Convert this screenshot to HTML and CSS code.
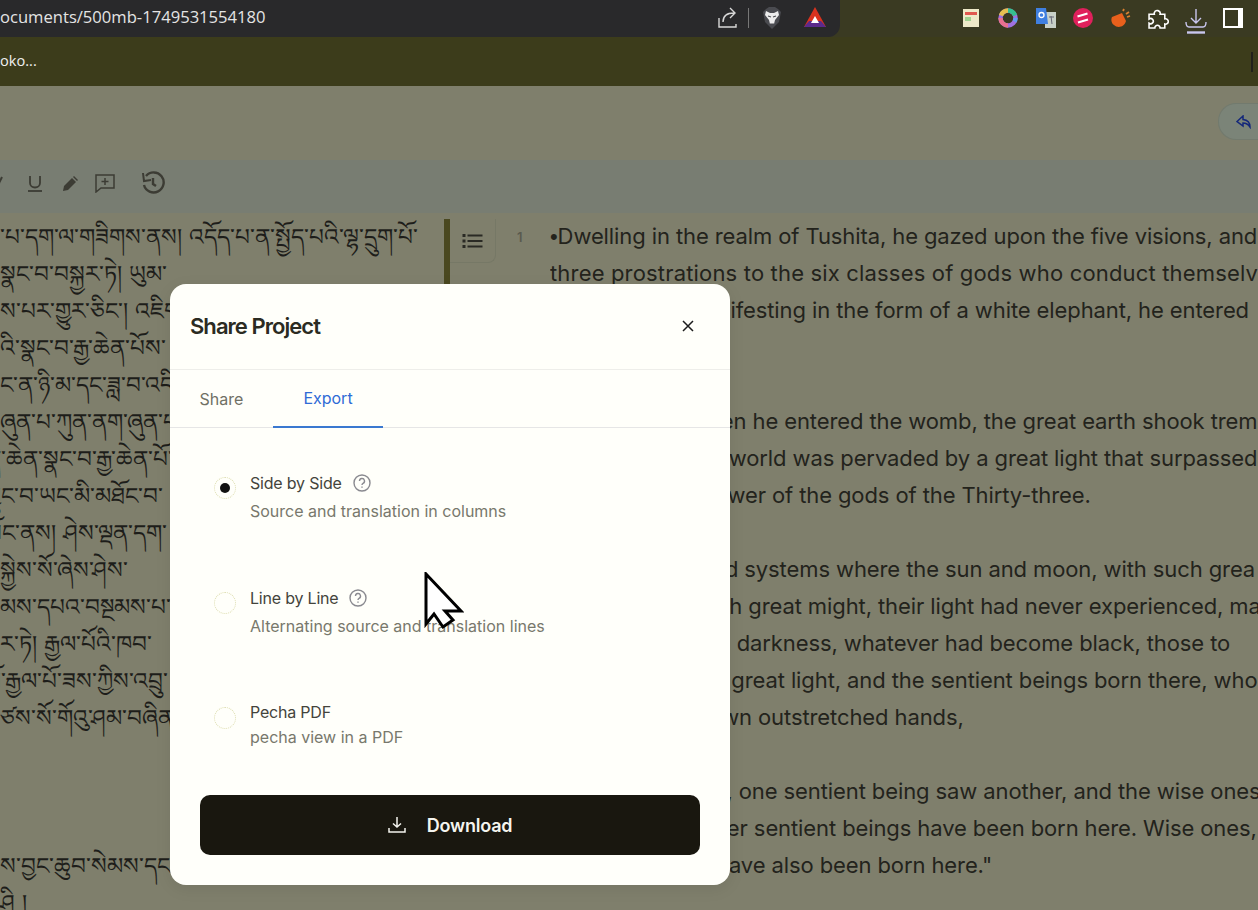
FILE: index.html
```html
<!DOCTYPE html>
<html lang="en">
<head>
<meta charset="utf-8">
<title>Share Project</title>
<link rel="stylesheet" href="styles.css">
</head>
<body>
<div class="browser">
  <div class="tabbar">
    <div class="address">
      <span class="url">ocuments/500mb-1749531554180</span>
      <div class="address-icons">
        <svg class="i24" viewBox="0 0 24 24" fill="none" stroke="#d8d8d8" stroke-width="1.400"><path d="M3 12v9h17v-3M7 16c0-6 4-9 11-9M14 2l5 5-5 5"/></svg>
        <span class="sep"></span>
        <svg class="i24 lion" viewBox="0 0 24 24"><path d="M6 3l3-2h6l3 2 3 3-2 10-7 7-7-7-2-10z" fill="#4a4b50"/><path d="M6 5l4 2h4l4-2 1 4-4 5-1 4h-4l-1-4-4-5z" fill="#ececec"/><path d="M8 10l3 1M16 10l-3 1M10 18h4" stroke="#4a4b50" stroke-width="1.200"/></svg>
        <svg class="i24 bat" viewBox="0 0 24 24"><path d="M12 1l11 20H1z" fill="#d8321f"/><path d="M1 21l5-6h12l5 6z" fill="#5b2a8c"/><path d="M12 10l4 7H8z" fill="#fff"/></svg>
      </div>
    </div>
    <div class="exts">
      <span class="ext"><svg class="i20" viewBox="0 0 20 20"><rect x="2" y="1" width="16" height="18" fill="#eee9c9"/><rect x="4" y="4" width="12" height="3" fill="#e0584f"/><rect x="4" y="9" width="6" height="4" fill="#9fd08f"/></svg></span>
      <span class="ext"><svg class="i20" viewBox="0 0 20 20" fill="none" stroke-width="4.400"><circle cx="10" cy="10" r="7.500" stroke="#a070e0"/><path d="M10 2.500a7.500 7.500 0 0 1 7 5" stroke="#35c090"/><path d="M3 7.500a7.500 7.500 0 0 1 7-5" stroke="#e8c050"/><path d="M10 17.500a7.500 7.500 0 0 1-7.500-7.500" stroke="#e87090"/><path d="M17.500 10a7.500 7.500 0 0 1-1 3.500" stroke="#60a0f0"/></svg></span>
      <span class="ext"><svg class="i20" viewBox="0 0 20 20"><rect x="9" y="4" width="11" height="16" fill="#c8d0c8"/><path d="M0 0h10l2 16H0z" fill="#3f7fe0"/><circle cx="5.500" cy="7" r="2.500" fill="none" stroke="#fff" stroke-width="1.300"/><path d="M13 9h5M15 8l1 8" stroke="#667" stroke-width="1"/></svg></span>
      <span class="ext"><svg class="i20" viewBox="0 0 20 20"><circle cx="10" cy="10" r="10" fill="#e0205c"/><path d="M4.500 8.500l10-3M5 14.500l10-3" stroke="#fff" stroke-width="2.200"/></svg></span>
      <span class="ext"><svg class="i20" viewBox="0 0 20 20"><path d="M1 9l10-4 4 8c-2 7-9 7-12 4-3-2-3-6-2-8z" fill="#e8601c"/><path d="M12 3l1-2M15 6l3-2M16 9l3-1" stroke="#d88030" stroke-width="1.800"/></svg></span>
      <span class="ext"><svg class="i21" viewBox="0 0 20 20" fill="none" stroke="#fff" stroke-width="1.500"><path d="M1 6h5a3 3 0 0 1 0-1.500 2.800 2.800 0 1 1 5.500 1.500H16v4.300a2.600 2.600 0 1 1 0 5V19h-4.500a2.500 2.500 0 1 0-5 0H1v-4.500a2.500 2.500 0 1 0 0-4z"/></svg></span>
      <span class="ext"><svg class="dl" viewBox="0 0 22 26" fill="none" stroke="#c9c6ee" stroke-width="1.400"><path d="M11 1v14M6 10l5 5 5-5M1 14c0 3 1 5 3 5h14c2 0 3-2 3-5"/><path d="M2 24.500h18" stroke-width="2.400"/></svg></span>
      <span class="ext"><svg class="i20" viewBox="0 0 20 20"><rect x="1" y="1" width="18" height="18" fill="none" stroke="#fff" stroke-width="2"/><rect x="15" y="1" width="5" height="18" fill="#fff"/></svg></span>
    </div>
  </div>
  <div class="bookmarks">
    <span class="bookmark">oko...</span>
    <span class="bm-sep"></span>
  </div>
</div>
<main class="app">
  <div class="app-head">
    <div class="undo-pill">
      <svg class="undo" viewBox="0 0 16 14" fill="none" stroke="#13277a" stroke-width="1.500"><path d="M7 1L1 6.500 7 11V8c3 0 5 1 7 4 0-5-3-7-7-7.500z"/></svg>
    </div>
  </div>
  <div class="toolbar">
    <svg class="tool t-first" viewBox="0 0 20 20" fill="none" stroke="#3c3c34" stroke-width="2"><path d="M6 16l6-12"/></svg>
    <svg class="tool" viewBox="0 0 20 20" fill="none" stroke="#3c3c34" stroke-width="1.800"><path d="M5 3v7c0 6 10 6 10 0V3"/><path d="M3 18h14"/></svg>
    <svg class="tool" viewBox="0 0 20 20"><path d="M3 18l1-5 8-8 4 4-8 8z" fill="#3c3c34"/><path d="M13 4l1-1 4 4-1 1z" fill="#3c3c34"/></svg>
    <svg class="tool" viewBox="0 0 20 20" fill="none" stroke="#3c3c34" stroke-width="1.500"><path d="M1 2h18v13H6l-5 4zM10 5v7M6.500 8.500h7"/></svg>
    <svg class="tool hist" viewBox="0 0 24 24" fill="none" stroke="#3c3c34" stroke-width="2.400"><path d="M5 5a10 10 0 1 1-2 9"/><path d="M2 2l1 8 7-1" stroke-width="2"/><path d="M12 7v6l3 2"/></svg>
  </div>
  <div class="editor">
    <div class="source">
      <p class="tb">་པ་དག་ལ་གཟིགས་ནས། འདོད་པ་ན་སྤྱོད་པའི་ལྷ་དྲུག་པོ་</p>
      <p class="tb">སྣང་བ་བསྐྱར་ཏེ། ཡུམ་</p>
      <p class="tb">ས་པར་གྱུར་ཅིང་། འཇིག་རྟེན་</p>
      <p class="tb">འི་སྣང་བ་རྒྱ་ཆེན་པོས་</p>
      <p class="tb">ང་ན་ཉི་མ་དང་ཟླ་བ་འདི་ལྟར་</p>
      <p class="tb">ཞུན་པ་ཀུན་ནག་ཞུན་པ་</p>
      <p class="tb bleed">ནི་ཆེན་སྣང་བ་རྒྱ་ཆེན་པོ་</p>
      <p class="tb bleed">བྱུང་བ་ཡང་མི་མཐོང་བ་</p>
      <p class="tb bleed">སོང་ནས། ཤེས་ལྡན་དག་</p>
      <p class="tb">སྐྱེས་སོ་ཞེས་ཤེས་</p>
      <p class="tb">མས་དཔའ་བསྔམས་པ་</p>
      <p class="tb">ར་ཏེ། རྒྱལ་པོའི་ཁབ་</p>
      <p class="tb bleed">པོ་རྒྱལ་པོ་ཟས་ཀྱིས་འབྲུ་</p>
      <p class="tb">ཙས་སོ་གོའུ་ཤམ་བཞིན་</p>
      <p class="tb"></p>
      <p class="tb"></p>
      <p class="tb"></p>
      <p class="tb">ས་བྱང་ཆུབ་སེམས་དང་</p>
      <p class="tb">ཤི །</p>
    </div>
    <div class="divider"></div>
    <div class="gutter">
      <div class="list-btn">
        <svg class="list-icon" viewBox="0 0 20 16" fill="#2a2a24"><rect x="0" y="1" width="3" height="3"/><rect x="0" y="6.500" width="3" height="3"/><rect x="0" y="12" width="3" height="3"/><rect x="5" y="1.500" width="15" height="2"/><rect x="5" y="7" width="15" height="2"/><rect x="5" y="12.500" width="15" height="2"/></svg>
      </div>
      <span class="line-no">1</span>
    </div>
    <div class="target">
      <p><span class="bullet">•</span>Dwelling in the realm of Tushita, he gazed upon the five visions, and</p>
      <p class="loose">three prostrations to the six classes of gods who conduct themselv</p>
      <p>And so then, manifesting in the form of a white elephant, he entered</p>
      <p>&nbsp;</p>
      <p>&nbsp;</p>
      <p>Furthermore, when he entered the womb, the great earth shook trem</p>
      <p>and so the entire world was pervaded by a great light that surpassed th</p>
      <p>exceeding the power of the gods of the Thirty-three.</p>
      <p>&nbsp;</p>
      <p>Even, all the world systems where the sun and moon, with such grea</p>
      <p>of power and such great might, their light had never experienced, ma</p>
      <p>all the everlasting darkness, whatever had become black, those to</p>
      <p>even there was a great light, and the sentient beings born there, who</p>
      <p>could see their own outstretched hands,</p>
      <p>&nbsp;</p>
      <p>even by that light, one sentient being saw another, and the wise ones</p>
      <p>and so said: "Other sentient beings have been born here. Wise ones,</p>
      <p>so other beings have also been born here."</p>
    </div>
  </div>
</main>
<section class="modal">
  <header class="modal-head">
    <h2>Share Project</h2>
    <svg class="close" viewBox="0 0 12 12" fill="none" stroke="#1c1c1c" stroke-width="1.500"><path d="M1 1l10 10M11 1L1 11"/></svg>
  </header>
  <nav class="tabs">
    <span class="tab">Share</span>
    <span class="tab active">Export</span>
  </nav>
  <div class="options">
    <div class="option">
      <span class="radio checked"></span>
      <div class="opt-text">
        <div class="opt-title">Side by Side <svg class="help" viewBox="0 0 18 18" fill="none" stroke="#8a8a90" stroke-width="1.400"><circle cx="9" cy="9" r="8"/><path d="M6.500 7a2.500 2.500 0 1 1 3.500 2.300c-.8.400-1 .8-1 1.700"/><path d="M9 12.500v1.200"/></svg></div>
        <div class="opt-sub">Source and translation in columns</div>
      </div>
    </div>
    <div class="option">
      <span class="radio"></span>
      <div class="opt-text">
        <div class="opt-title">Line by Line <svg class="help" viewBox="0 0 18 18" fill="none" stroke="#8a8a90" stroke-width="1.400"><circle cx="9" cy="9" r="8"/><path d="M6.500 7a2.500 2.500 0 1 1 3.500 2.300c-.8.400-1 .8-1 1.700"/><path d="M9 12.500v1.200"/></svg></div>
        <div class="opt-sub">Alternating source and translation lines</div>
      </div>
    </div>
    <div class="option last">
      <span class="radio"></span>
      <div class="opt-text">
        <div class="opt-title">Pecha PDF</div>
        <div class="opt-sub">pecha view in a PDF</div>
      </div>
    </div>
  </div>
  <button class="download">
    <svg class="dl-icon" viewBox="0 0 18 18" fill="none" stroke="#f4f4ee" stroke-width="1.500"><path d="M9 1v10M5 7.500L9 11l4-3.500M1 12v4h16v-4"/></svg>
    <span>Download</span>
  </button>
</section>
<svg class="cursor" viewBox="0 0 40 58"><path d="M2 2l35 37H21l8 9-10 7-9-13-8 10z" fill="#fff" stroke="#000" stroke-width="3"/></svg>
</body>
</html>
```
FILE: styles.css
```css
* { box-sizing: border-box; }
html, body { margin: 0; padding: 0; width: 1258px; height: 910px; overflow: hidden; }
body { font-family: Inter, "Liberation Sans", sans-serif; background: #fff; position: relative; }
p { margin: 0; }

.browser { height: 86px; display: flex; flex-direction: column; }
.tabbar { height: 37px; background: #3a3a22; display: flex; align-items: flex-start; }
.address { width: 840px; height: 37px; background: #29292b; border-bottom-right-radius: 12px; display: flex; align-items: center; justify-content: space-between; }
.url { font-family: "Open Sans", sans-serif; font-size: 16.6px; color: #e4e4e4; padding-bottom: 5px; }
.address-icons { display: flex; align-items: center; padding-right: 13px; margin-top: -2px; }
.sep { width: 1px; height: 20px; background: #777; margin: 0 11px 0 8px; }
.lion { margin-right: 19px; }
.i24 { width: 24px; height: 24px; flex: none; }
.i20 { width: 20px; height: 20px; flex: none; }
.i21 { width: 21px; height: 21px; flex: none; }
.exts { flex: 1; display: flex; padding: 8px 0 0 112px; }
.ext { width: 37.5px; height: 20px; display: flex; justify-content: center; align-items: center; flex: none; }
.dl { width: 22px; height: 26px; flex: none; margin-top: 6px; }
.bookmarks { flex: 1; background: #3c3c1b; display: flex; align-items: center; justify-content: space-between; padding-right: 5px; }
.bookmark { font-family: "Open Sans", sans-serif; font-size: 14.6px; color: #f0f0f0; padding-bottom: 4px; }
.bm-sep { width: 2px; height: 20px; background: #20201a; }

.app { height: 824px; background: #7f7f6c; display: flex; flex-direction: column; overflow: hidden; }
.app-head { height: 74px; flex: none; display: flex; justify-content: flex-end; align-items: flex-start; padding-top: 17px; }
.undo-pill { width: 40px; height: 37px; background: #7b8478; border: 1px solid #727a6e; border-right: 0; border-radius: 18px 0 0 18px; display: flex; align-items: center; padding-left: 17px; }
.undo { width: 16px; height: 14px; }
.toolbar { height: 53px; flex: none; background: #787d72; display: flex; align-items: center; gap: 15px; padding-bottom: 8px; }
.tool { width: 20px; height: 20px; flex: none; }
.t-first { margin-left: -10px; }
.tool.hist { width: 24px; height: 24px; margin-left: 11px; }
.editor { flex: 1; display: flex; padding-top: 5px; min-height: 0; }
.source { width: 444px; flex: none; overflow: hidden; }
.tb { font-family: "Noto Sans Tibetan", "DejaVu Sans", "Noto Sans", sans-serif; font-size: 23.2px; line-height: 37px; height: 37px; color: #1d1d1a; white-space: nowrap; }
.bleed { margin-left: -14px; }
.divider { width: 6px; height: 66px; background: #4a4820; flex: none; margin-top: 1px; }
.gutter { width: 100px; flex: none; display: flex; align-items: flex-start; }
.list-btn { width: 46px; height: 44px; margin: 1px 0 0 0; border: 1px solid #767866; border-top: 0; border-left: 0; border-radius: 0 0 8px 0; display: flex; align-items: center; justify-content: center; }
.list-icon { width: 21px; height: 16px; }
.line-no { margin: 11px 0 0 21px; font-size: 13px; font-weight: 600; color: #5a5a4e; }
.target { flex: 1; overflow: hidden; }
.target p { font-size: 22px; line-height: 37px; height: 37px; white-space: nowrap; color: #23231c; letter-spacing: -0.1px; }
.target p.loose { letter-spacing: 0.17px; }
.bullet { font-family: "Liberation Sans", sans-serif; }

.modal { position: absolute; left: 170px; top: 284px; width: 560px; height: 601px; background: #fffffa; border-radius: 16px; box-shadow: 0 4px 16px rgba(0,0,0,.08); display: flex; flex-direction: column; }
.modal-head { height: 86px; padding: 0 36px 2px 20px; display: flex; align-items: center; justify-content: space-between; border-bottom: 1px solid #eeeeea; }
.modal-head h2 { margin: 0; font-size: 22px; font-weight: 600; color: #2b2b22; letter-spacing: -0.95px; }
.close { width: 12px; height: 12px; }
.tabs { height: 58px; display: flex; border-bottom: 1px solid #e6e6e6; font-size: 16px; }
.tab { width: 103px; display: flex; align-items: center; justify-content: center; color: #707065; }
.tab.active { width: 110px; color: #2f6bd6; border-bottom: 2px solid #3a78d0; height: 58px; }
.options { flex: 1; padding: 43px 30px 0 44px; display: flex; flex-direction: column; }
.option { display: flex; gap: 14px; height: 115px; flex: none; }
.option.last { height: 80px; }
.radio { width: 22px; height: 22px; border-radius: 50%; border: 1px dotted #dcdcae; margin-top: 6px; display: flex; align-items: center; justify-content: center; flex: none; }
.radio.checked::after { content: ""; width: 10px; height: 10px; border-radius: 50%; background: #111; }
.opt-title { font-size: 16px; line-height: 24px; color: #44443c; display: flex; align-items: center; gap: 11px; letter-spacing: -0.2px; }
.opt-sub { font-size: 16px; line-height: 26px; color: #78786c; margin-top: 3px; }
.last .opt-text { margin-top: -1px; }
.last .opt-sub { margin-top: 0; }
.help { width: 18px; height: 18px; }
.download { margin: 0 30px 30px; height: 60px; background: #19170f; color: #f4f4ee; border: 0; border-radius: 10px; display: flex; align-items: center; justify-content: center; gap: 21px; font: 600 18px Inter, sans-serif; letter-spacing: -0.2px; flex: none; }
.dl-icon { width: 18px; height: 18px; }
.cursor { position: absolute; left: 424px; top: 572px; width: 40px; height: 58px; }
```
